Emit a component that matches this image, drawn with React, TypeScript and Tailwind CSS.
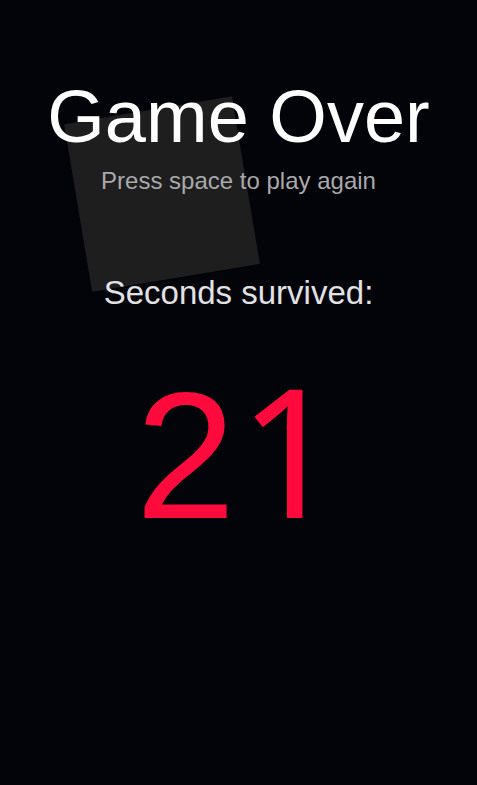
export default function App() {
  return (
    <div className="relative min-h-[785px] w-full overflow-hidden bg-[#03040a] font-['Liberation_Sans',Arial,sans-serif]">
      <div className="absolute left-[77px] top-[109px] h-[170px] w-[170px] -rotate-[9.5deg] bg-[#1e1e1f]" />
      <div className="relative flex flex-col items-center">
        <h1 className="mt-[80px] text-[74px] leading-[74px] text-white">Game Over</h1>
        <p className="mt-[15px] text-[24px] leading-[24px] text-[#a9a9ab]">Press space to play again</p>
        <p className="mt-[83px] text-[33px] leading-[33px] text-[#e2e2e4]">Seconds survived:</p>
        <p className="mt-[57px] text-[180px] leading-[180px] text-[#ff0a3c]">
          2<span className="ml-[3px] font-['Noto_Sans',sans-serif] leading-[160px]">1</span>
        </p>
      </div>
    </div>
  );
}
